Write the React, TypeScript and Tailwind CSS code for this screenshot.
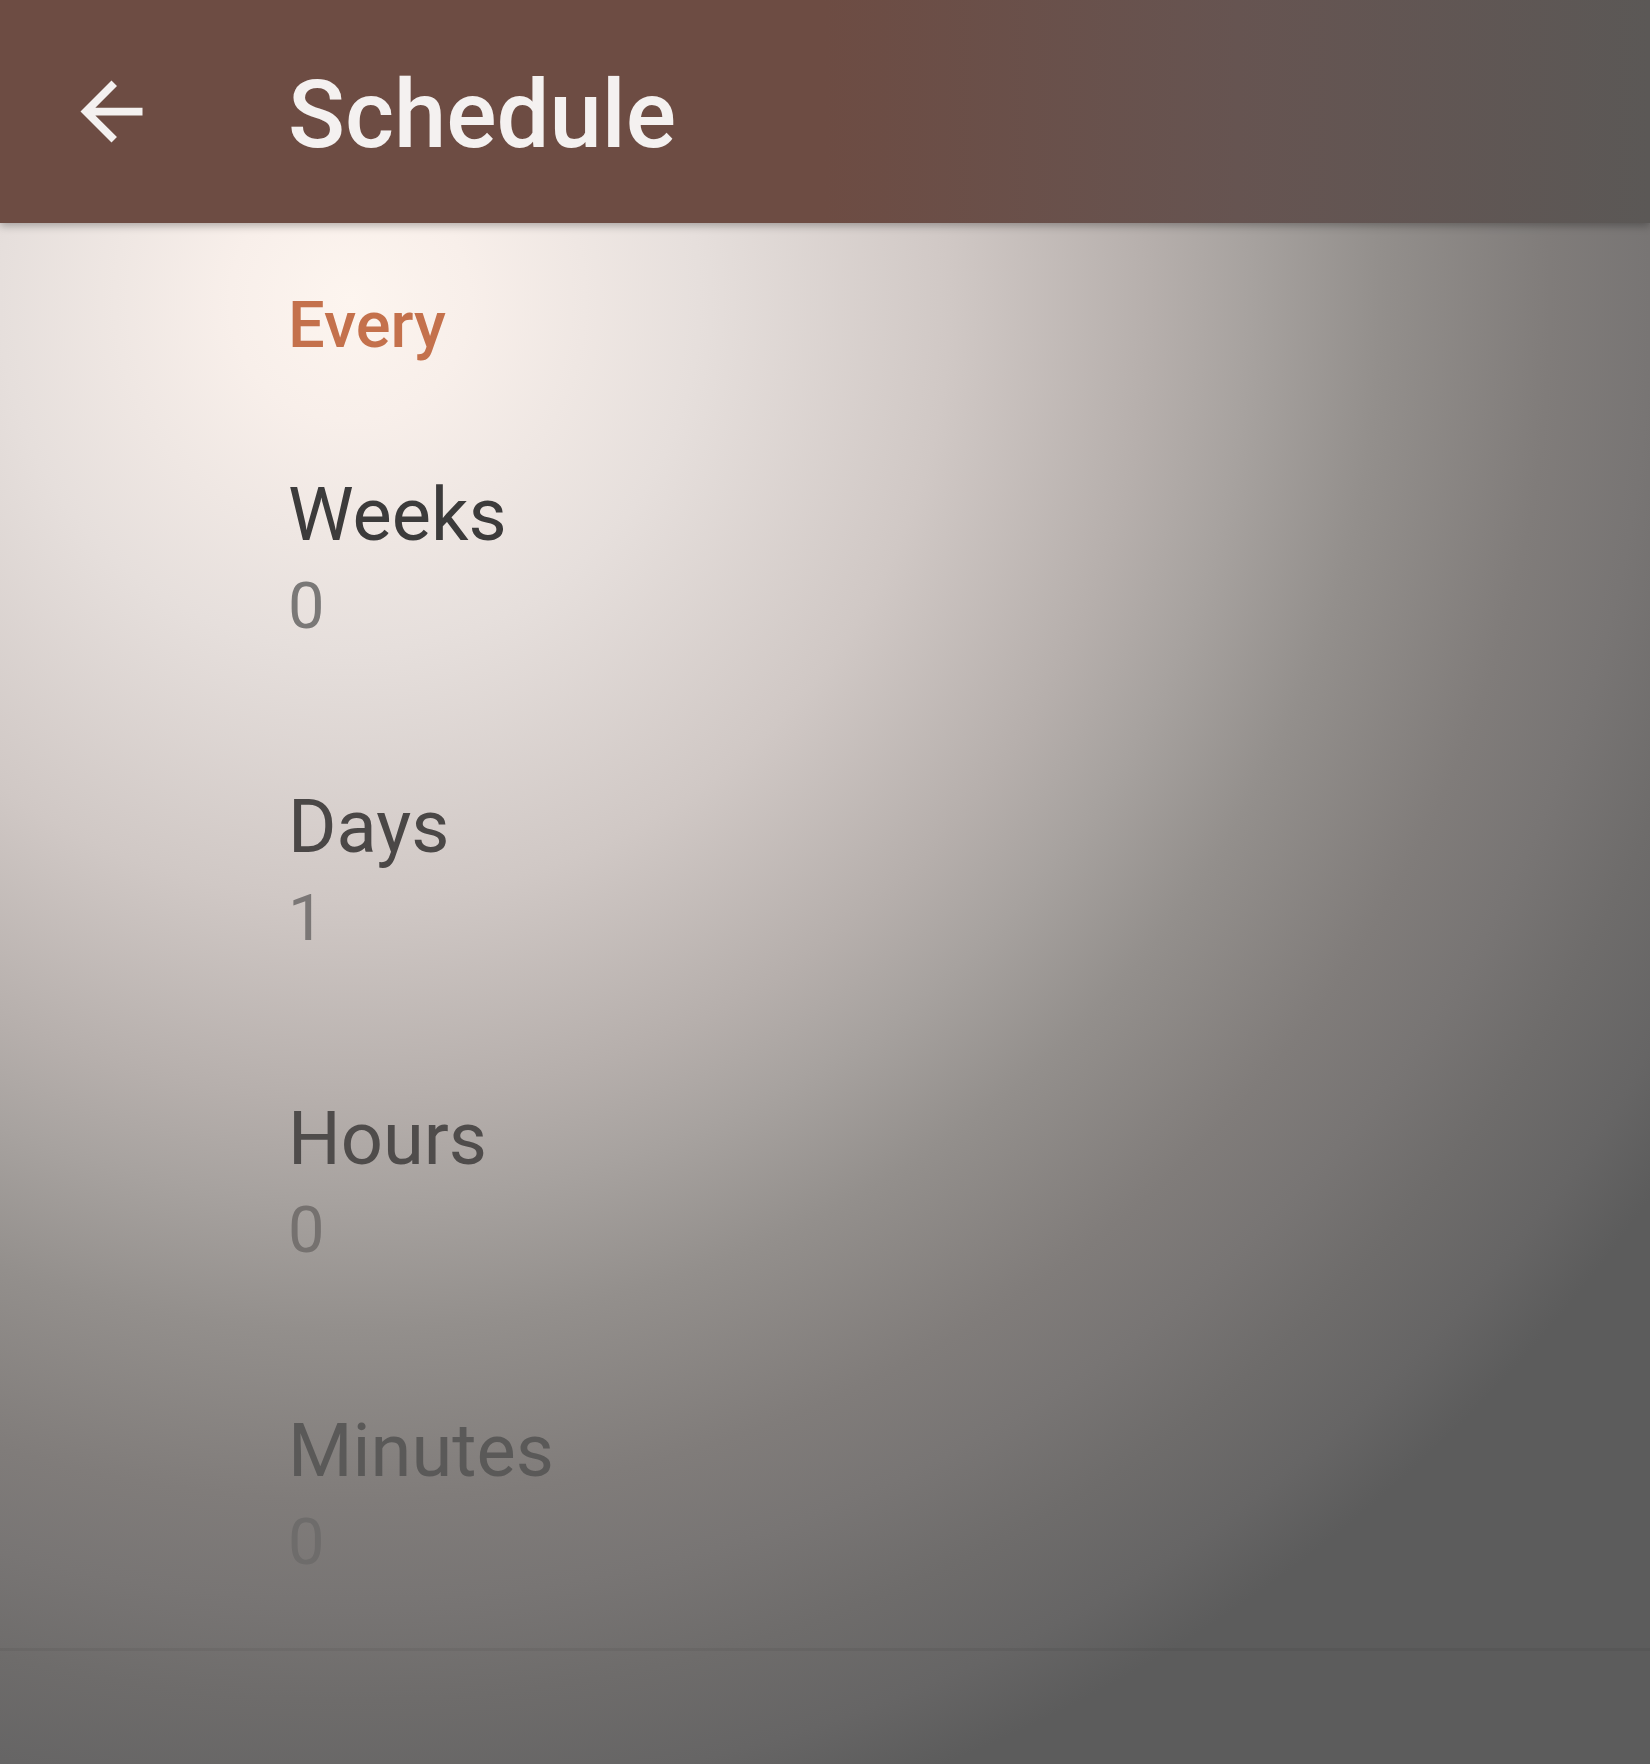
const rows = [
  { title: "Weeks", value: "0", titleColor: "text-[#3c3b3b]", valueColor: "text-[#7a7877]" },
  { title: "Days", value: "1", titleColor: "text-[#4a4746]", valueColor: "text-[#7b7776]" },
  { title: "Hours", value: "0", titleColor: "text-[#4f4c4b]", valueColor: "text-[#75716f]" },
  { title: "Minutes", value: "0", titleColor: "text-[#5a5958]", valueColor: "text-[#6e6c6b]" },
];

const BackArrow = () => (
  <svg viewBox="0 0 24 24" className="h-[93px] w-[93px]" fill="#f4f1f0">
    <path d="M20 11H7.83l5.59-5.59L12 4l-8 8 8 8 1.41-1.41L7.83 13H20v-2z" />
  </svg>
);

export default function App() {
  return (
    <div className="relative h-[1764px] w-[1650px] overflow-hidden bg-[radial-gradient(circle_at_350px_300px,#fdf5ef_0px,#f8efea_120px,#e6dfdc_350px,#d0c8c5_600px,#b6afac_800px,#a7a29f_900px,#938f8c_1030px,#807c7a_1200px,#787574_1300px,#6e6c6b_1400px,#666565_1500px,#5c5c5c_1580px)] font-['Roboto',sans-serif]">
      {/* toolbar */}
      <header className="relative z-10 flex h-[223px] items-start bg-[linear-gradient(to_right,#6d4c43_0%,#6d4c43_50%,#665451_75%,#5b5856_100%)] shadow-[0_3px_8px_rgba(0,0,0,0.28)]">
        <button className="ml-[65px] mt-[65px]">
          <BackArrow />
        </button>
        <h1 className="ml-[130px] mt-[68px] text-[94px] font-medium leading-none text-[#f4f1f0]">
          Schedule
        </h1>
      </header>

      <main className="pl-[288px]">
        <h2 className="pt-[70px] pb-[42px] text-[65px] font-medium leading-none text-[#c4714c]">
          Every
        </h2>
        {rows.map((r) => (
          <div key={r.title} className="flex flex-col pt-[78px] pb-[73px]">
            <div className={`text-[74px] leading-none ${r.titleColor}`}>{r.title}</div>
            <div className={`mt-[22px] text-[65px] leading-none ${r.valueColor}`}>{r.value}</div>
          </div>
        ))}
      </main>
      <div className="h-[3px] bg-black/5" />
    </div>
  );
}
